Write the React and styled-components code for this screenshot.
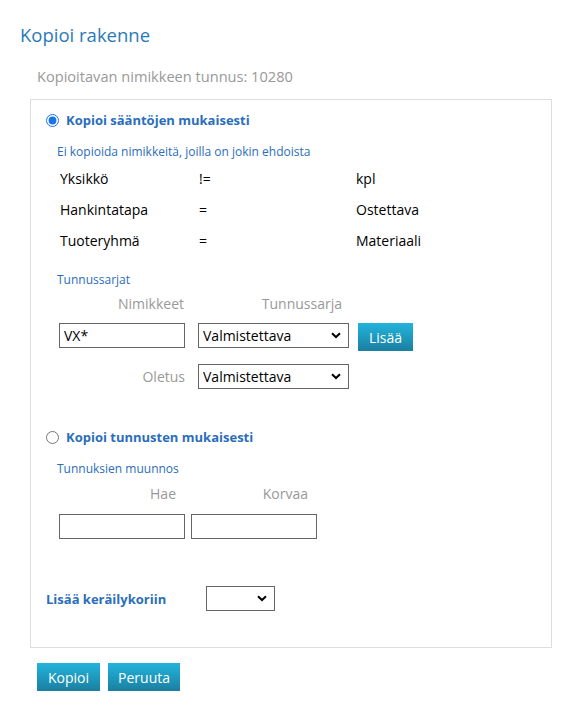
import React from "react";
import styled, { createGlobalStyle } from "styled-components";

const Global = createGlobalStyle`
  body { margin: 0; background: #fff; font-family: "Open Sans", "Noto Sans", sans-serif; color: #000; }
  * { box-sizing: border-box; }
`;

const Page = styled.div`
  padding: 22px 30px 0 20px;
  width: 582px;
`;

const Title = styled.h1`
  margin: 0;
  font-size: 18.5px;
  font-weight: 400;
  color: #2a7ab8;
  line-height: 26px;
`;

const Sub = styled.div`
  margin: 18px 0 0 17px;
  font-size: 14.6px;
  color: #999;
  line-height: 20px;
`;

const Panel = styled.div`
  margin: 13px 0 0 10px;
  width: 522px;
  border: 1px solid #ddd;
  padding: 11px 15px 36px 15px;
`;

const RadioRow = styled.label`
  display: flex;
  align-items: center;
  gap: 7px;
  font-size: 13px;
  font-weight: 700;
  color: #2a6ebb;
  line-height: 18px;
  margin-top: ${(p) => p.$mt || 0}px;
`;

const Radio = styled.input`
  margin: 0;
  width: 13px;
  height: 13px;
  accent-color: #1a73e8;
`;

const Section = styled.div`
  padding-left: 11px;
`;

const Caption = styled.div`
  font-size: 12px;
  color: #2a6ebb;
  line-height: 16px;
  margin-top: ${(p) => p.$mt || 0}px;
`;

const Rules = styled.div`
  display: grid;
  grid-template-columns: 139px 157px auto;
  padding-left: 3px;
  margin-top: 9px;
  row-gap: 11px;
  font-size: 14px;
  line-height: 20px;
`;

const HeadRow = styled.div`
  display: grid;
  grid-template-columns: ${(p) => p.$cols};
  font-size: 14px;
  color: #999;
  line-height: 20px;
  margin-top: ${(p) => p.$mt || 7}px;
`;

const Head = styled.div`
  text-align: right;
`;

const FieldRow = styled.div`
  display: flex;
  align-items: center;
  gap: ${(p) => p.$gap || 13}px;
  margin-top: ${(p) => p.$mt || 0}px;
  padding-left: 2px;
`;

const TextInput = styled.input`
  width: 126px;
  height: 25px;
  border: 1px solid #666;
  padding: 0 4px;
  font: inherit;
  font-size: 14px;
  color: #000;
  outline: none;
`;

const SelectWrap = styled.div`
  position: relative;
  width: ${(p) => p.$w}px;
  height: 25px;
`;

const Select = styled.select`
  appearance: none;
  width: 100%;
  height: 100%;
  border: 1px solid #666;
  background: #fff;
  padding: 0 20px 0 4px;
  font: inherit;
  font-size: 14px;
  color: #000;
  border-radius: 0;
`;

const Chevron = styled.svg`
  position: absolute;
  right: 8px;
  top: 9px;
  pointer-events: none;
`;

const Btn = styled.button`
  height: 28px;
  padding: 0 ${(p) => p.$px || 6}px;
  border: none;
  border-radius: 0;
  background: linear-gradient(#22b4dc, #1b7fa1);
  color: #fff;
  font: inherit;
  font-size: 14px;
  cursor: pointer;
`;

const AddBtn = styled(Btn)`
  margin: 4px 0 0 -4px;
`;

const Label = styled.div`
  width: 126px;
  text-align: right;
  font-size: 14px;
  color: #999;
`;

const BasketRow = styled.div`
  display: flex;
  align-items: center;
  gap: 39px;
  margin-top: 47px;
`;

const BasketLabel = styled.div`
  font-size: 13px;
  font-weight: 700;
  color: #2a6ebb;
  width: 121px;
`;

const Buttons = styled.div`
  display: flex;
  gap: 8px;
  margin: 15px 0 0 17px;
`;

function Dropdown({ w, value }) {
  return (
    <SelectWrap $w={w}>
      <Select defaultValue={value}>
        {value ? <option>{value}</option> : <option></option>}
      </Select>
      <Chevron width="10" height="7" viewBox="0 0 10 7">
        <path d="M1 1.2 L5 5 L9 1.2" fill="none" stroke="#000" strokeWidth="2" />
      </Chevron>
    </SelectWrap>
  );
}

export default function App() {
  return (
    <Page>
      <Global />
      <Title>Kopioi rakenne</Title>
      <Sub>Kopioitavan nimikkeen tunnus: 10280</Sub>
      <Panel>
        <RadioRow>
          <Radio type="radio" name="mode" defaultChecked />
          Kopioi sääntöjen mukaisesti
        </RadioRow>
        <Section>
          <Caption $mt={15}>Ei kopioida nimikkeitä, joilla on jokin ehdoista</Caption>
          <Rules>
            <div>Yksikkö</div><div>!=</div><div>kpl</div>
            <div>Hankintatapa</div><div>=</div><div>Ostettava</div>
            <div>Tuoteryhmä</div><div>=</div><div>Materiaali</div>
          </Rules>
          <Caption $mt={21}>Tunnussarjat</Caption>
          <HeadRow $cols="127px 158px" $mt={6}>
            <Head>Nimikkeet</Head>
            <Head>Tunnussarja</Head>
          </HeadRow>
          <FieldRow $mt={5} $gap={13}>
            <TextInput defaultValue="VX*" />
            <Dropdown w={151} value="Valmistettava" />
            <AddBtn $px={11}>Lisää</AddBtn>
          </FieldRow>
          <FieldRow $mt={13} $gap={13}>
            <Label>Oletus</Label>
            <Dropdown w={151} value="Valmistettava" />
          </FieldRow>
        </Section>
        <RadioRow $mt={39}>
          <Radio type="radio" name="mode" />
          Kopioi tunnusten mukaisesti
        </RadioRow>
        <Section>
          <Caption $mt={15}>Tunnuksien muunnos</Caption>
          <HeadRow $cols="119px 132px">
            <Head>Hae</Head>
            <Head>Korvaa</Head>
          </HeadRow>
          <FieldRow $mt={10} $gap={6}>
            <TextInput />
            <TextInput />
          </FieldRow>
        </Section>
        <BasketRow>
          <BasketLabel>Lisää keräilykoriin</BasketLabel>
          <Dropdown w={69} value="" />
        </BasketRow>
      </Panel>
      <Buttons>
        <Btn $px={11}>Kopioi</Btn>
        <Btn $px={10}>Peruuta</Btn>
      </Buttons>
    </Page>
  );
}
